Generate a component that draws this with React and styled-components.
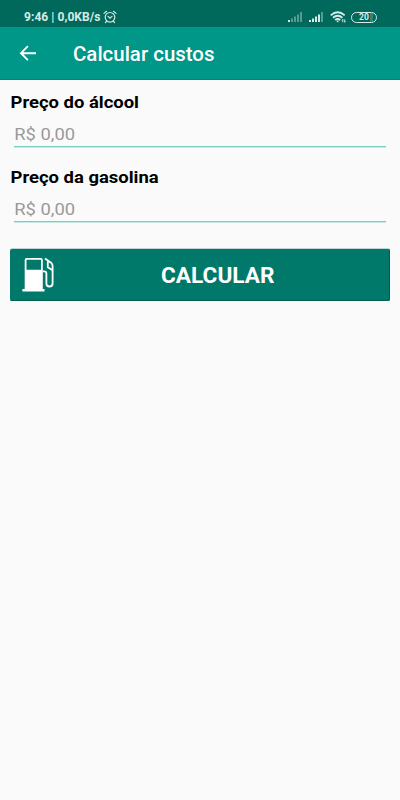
import React from 'react';
import styled, { createGlobalStyle } from 'styled-components';

const GlobalStyle = createGlobalStyle`
  * { box-sizing: border-box; }
  body { margin: 0; background: #fafafa; font-family: Roboto, "Liberation Sans", sans-serif; }
`;

const Screen = styled.div`
  width: 400px;
  height: 800px;
  overflow: hidden;
  background: #fafafa;
`;

const StatusBar = styled.div`
  height: 27px;
  padding: 7px 23px 0 24px;
  display: flex;
  align-items: center;
  background: #00695c;
  color: #d9e9e7;
`;

const StatusText = styled.span`
  flex: none;
  width: 79px;
  font-size: 12px;
  line-height: 16px;
  font-weight: 700;
  letter-spacing: 0.06px;
  white-space: nowrap;
`;

const StatusIcons = styled.div`
  margin-left: auto;
  display: flex;
  align-items: center;
`;

const Icon = styled.svg`
  display: block;
  flex: none;
  margin-left: ${(p) => p.$gap || 0}px;
`;

const Battery = styled.div`
  width: 26px;
  height: 11px;
  margin-left: 4px;
  border: 1.5px solid #d9e9e7;
  border-radius: 5.5px;
  display: flex;
  align-items: center;
  justify-content: center;
  font-size: 8.5px;
  line-height: 8px;
  font-weight: 700;
  background: linear-gradient(90deg, transparent 75%, #2f8377 75%, #2f8377 88%, transparent 88%);
`;

const AppBar = styled.header`
  height: 53px;
  padding-left: 19px;
  display: flex;
  align-items: center;
  background: #009688;
  border-bottom: 1px solid #00877a;
  color: #fff;
`;

const Title = styled.h1`
  margin: 4px 0 0 36px;
  font-size: 19.4px;
  line-height: 26px;
  font-weight: 500;
  transform: scaleX(1.055);
  transform-origin: left;
`;

const Form = styled.main`
  padding: 10px 10px 0;
  display: flex;
  flex-direction: column;
`;

const Label = styled.label`
  height: 22px;
  align-self: flex-start;
  font-size: 17px;
  line-height: 22px;
  font-weight: 700;
  color: #000;
  transform: translate(0.5px, 0.6px) scaleX(1.085);
  transform-origin: left;
`;

const Field = styled.div`
  height: 35px;
  margin: 0 4px 18px;
  padding-top: 10px;
  border-bottom: 1px solid #80cbc0;
  box-shadow: 0 1px 0 #c5e9e4;
`;

const Input = styled.input`
  display: block;
  width: 92%;
  height: 22px;
  padding: 0;
  border: 0;
  outline: 0;
  background: transparent;
  font: 400 17px/22px Roboto, "Liberation Sans", sans-serif;
  transform: translate(0.3px, 0.6px) scaleX(1.08);
  transform-origin: left;
  &::placeholder { color: #999; opacity: 1; }
`;

const SubmitButton = styled.button`
  height: 52px;
  margin-top: 9px;
  padding: 0 0 0 12px;
  border: 0;
  border-radius: 2px;
  display: flex;
  align-items: center;
  background: #00796b;
  box-shadow: inset -1px -1px 0 #00604f, 0 -1px 0 #c3d5d2;
  color: #fff;
`;

const ButtonText = styled.span`
  flex: 1;
  padding: 2px 9px 0 0;
  text-align: center;
  font: 700 21.4px/28px Roboto, "Liberation Sans", sans-serif;
  transform: scaleX(1.057);
`;

function Signal({ active, gap }) {
  return (
    <Icon $gap={gap} width="15" height="10" viewBox="0 0 15 10" fill="#d9e9e7">
      {[2, 3.5, 5.5, 7.5, 10].map((h, i) => (
        <rect key={h} x={i * 3} y={10 - h} width="2" height={h} opacity={i < active ? 1 : 0.4} />
      ))}
    </Icon>
  );
}

function PriceField({ id, label }) {
  return (
    <>
      <Label htmlFor={id}>{label}</Label>
      <Field>
        <Input id={id} placeholder="R$ 0,00" />
      </Field>
    </>
  );
}

export default function App() {
  return (
    <Screen>
      <GlobalStyle />
      <StatusBar>
        <StatusText>9:46 | 0,0KB/s</StatusText>
        <Icon width="14" height="14" viewBox="0 0 14 14" fill="none" stroke="#d9e9e7" strokeWidth="1.2" strokeLinecap="round">
          <circle cx="7" cy="7.3" r="4.8" />
          <path d="M1 3.4 3.5 1.3M13 3.4 10.5 1.3M3.6 11.2 2.5 12.5M10.4 11.2l1.1 1.3M5 6.4l2 1.7 2-1.7" />
        </Icon>
        <StatusIcons>
          <Signal active={1} />
          <Signal active={4} gap={6} />
          <Icon $gap={6} width="17" height="12" viewBox="0 0 17 12" fill="none" stroke="#d9e9e7" strokeWidth="1.8">
            <path d="M.7 4.4Q7.7-1.8 14.7 4.4M3 6.8q4.7-4 9.4 0M5.2 9q2.5-2 5 0" />
            <path d="M6.2 9.8h3L7.7 11.5Z" fill="#d9e9e7" stroke="none" />
            <path d="M12.8 8.3v3M14.7 8.3v3M12 9.5l.8-1.2M14.7 11.3l.9-1" strokeWidth=".9" />
          </Icon>
          <Battery>20</Battery>
        </StatusIcons>
      </StatusBar>
      <AppBar>
        <Icon width="18" height="16" viewBox="0 0 18 16" fill="none" stroke="#fff" strokeWidth="1.9">
          <path d="M17 8.2H2.3M8.9 1.2 2 8.2l6.9 6.9" />
        </Icon>
        <Title>Calcular custos</Title>
      </AppBar>
      <Form>
        <PriceField id="alcool" label="Preço do álcool" />
        <PriceField id="gasolina" label="Preço da gasolina" />
        <SubmitButton type="button">
          <Icon width="33" height="36" viewBox="0 0 33 36" fill="none" stroke="#fff" strokeWidth="1.8">
            <path fillRule="evenodd" fill="#fff" stroke="none" d="M2.7 3Q2.7 1 4.7 1H18.8Q20.8 1 20.8 3V32H22.5V34.6H.4V32H2.7ZM4.5 2.8V12.7H19V2.8Z" />
            <path d="M20.8 14.3h1.6q2 0 2 2.2V26.5q0 3 3.1 3t3.1-3V9.2q0-2-1.3-3.3L23 1.4M25.8 4.5v5.8l4.4 2.8" />
          </Icon>
          <ButtonText>CALCULAR</ButtonText>
        </SubmitButton>
      </Form>
    </Screen>
  );
}
